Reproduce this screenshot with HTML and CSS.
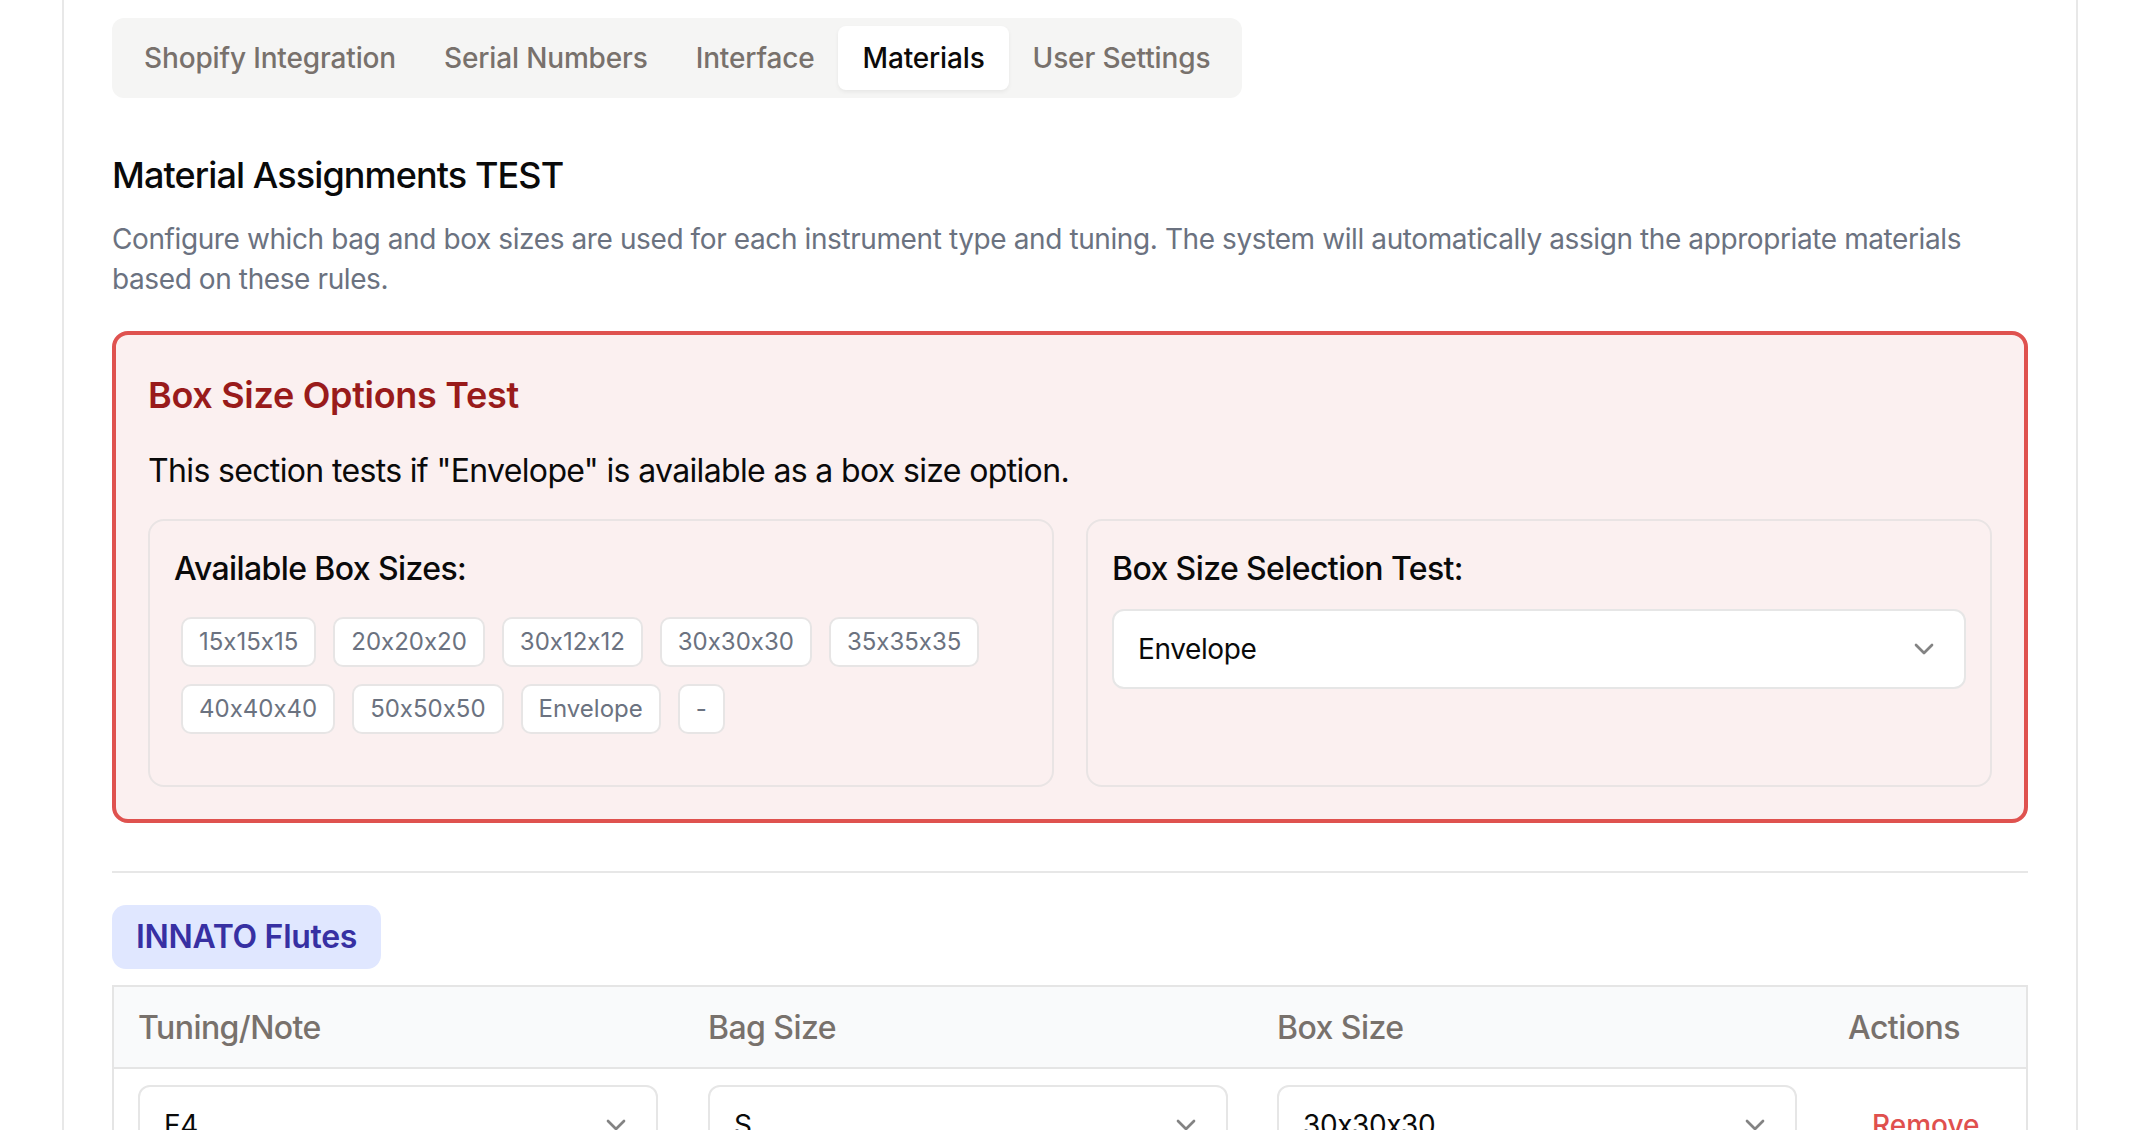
FILE: index.html
```html
<!DOCTYPE html>
<html lang="en">
<head>
<meta charset="utf-8">
<title>Materials</title>
<link rel="stylesheet" href="styles.css">
</head>
<body>
<div class="page">
  <div class="card">
    <div class="tabs">
      <div class="tab">Shopify Integration</div>
      <div class="tab">Serial Numbers</div>
      <div class="tab">Interface</div>
      <div class="tab active">Materials</div>
      <div class="tab">User Settings</div>
    </div>

    <h2 class="title">Material Assignments TEST</h2>
    <p class="desc">Configure which bag and box sizes are used for each instrument type and tuning. The system will automatically assign the appropriate materials based on these rules.</p>

    <section class="testbox">
      <h3 class="test-title">Box Size Options Test</h3>
      <p class="test-text">This section tests if "Envelope" is available as a box size option.</p>
      <div class="test-grid">
        <div class="panel panel-left">
          <div class="panel-label">Available Box Sizes:</div>
          <div class="badges">
            <span class="badge">15x15x15</span>
            <span class="badge">20x20x20</span>
            <span class="badge">30x12x12</span>
            <span class="badge">30x30x30</span>
            <span class="badge">35x35x35</span>
            <span class="badge">40x40x40</span>
            <span class="badge">50x50x50</span>
            <span class="badge">Envelope</span>
            <span class="badge">-</span>
          </div>
        </div>
        <div class="panel">
          <div class="panel-label">Box Size Selection Test:</div>
          <div class="select select-full">
            <span>Envelope</span>
            <svg class="chev" viewBox="0 0 24 24" width="32" height="32" fill="none" stroke="currentColor" stroke-width="2" stroke-linecap="round" stroke-linejoin="round"><path d="m6 9 6 6 6-6"/></svg>
          </div>
        </div>
      </div>
    </section>

    <hr class="divider">

    <div class="group-pill">INNATO Flutes</div>

    <table class="table">
      <colgroup>
        <col class="c1"><col class="c2"><col class="c3"><col class="c4">
      </colgroup>
      <thead>
        <tr>
          <th>Tuning/Note</th>
          <th>Bag Size</th>
          <th>Box Size</th>
          <th>Actions</th>
        </tr>
      </thead>
      <tbody>
        <tr>
          <td>
            <div class="select select-row"><span>F4</span><svg class="chev" viewBox="0 0 24 24" width="32" height="32" fill="none" stroke="currentColor" stroke-width="2" stroke-linecap="round" stroke-linejoin="round"><path d="m6 9 6 6 6-6"/></svg></div>
          </td>
          <td>
            <div class="select select-row"><span>S</span><svg class="chev" viewBox="0 0 24 24" width="32" height="32" fill="none" stroke="currentColor" stroke-width="2" stroke-linecap="round" stroke-linejoin="round"><path d="m6 9 6 6 6-6"/></svg></div>
          </td>
          <td>
            <div class="select select-row"><span>30x30x30</span><svg class="chev" viewBox="0 0 24 24" width="32" height="32" fill="none" stroke="currentColor" stroke-width="2" stroke-linecap="round" stroke-linejoin="round"><path d="m6 9 6 6 6-6"/></svg></div>
          </td>
          <td><button class="remove">Remove</button></td>
        </tr>
      </tbody>
    </table>
  </div>
</div>
</body>
</html>
```

FILE: styles.css
```css
* { box-sizing: border-box; }
html, body { margin: 0; padding: 0; background: #ffffff; }
body {
  font-family: Inter, "Liberation Sans", sans-serif;
  font-feature-settings: "calt" 0;
  color: #0a0a0a;
  overflow: hidden;
}
.page {
  padding-left: 62px;
}
.card {
  width: 2016px;
  border: 2px solid #e8e8e8;
  border-top: none;
  padding: 18px 48px 48px 48px;
  background: #ffffff;
}
.tabs {
  display: inline-flex;
  align-items: center;
  height: 80px;
  padding: 8px;
  background: #f5f5f4;
  border-radius: 12px;
}
.tab {
  height: 64px;
  display: flex;
  align-items: center;
  padding: 0 24px;
  font-size: 28px;
  font-weight: 500;
  letter-spacing: -0.15px;
  color: #78716c;
  border-radius: 8px;
  white-space: nowrap;
}
.tab.active {
  background: #ffffff;
  color: #0c0a09;
  box-shadow: 0 2px 4px rgba(0,0,0,0.06);
}
.title {
  margin: 49px 0 0 0;
  font-size: 36px;
  line-height: 56px;
  font-weight: 500;
  letter-spacing: -0.9px;
  color: #0a0a0a;
}
.desc {
  margin: 16px 0 0 0;
  font-size: 28px;
  line-height: 40px;
  letter-spacing: -0.4px;
  color: #6b7280;
}
.testbox {
  margin-top: 32px;
  border: 4px solid #df524f;
  border-radius: 16px;
  background: #fbf0f0;
  padding: 32px;
}
.test-title {
  margin: 0;
  font-size: 36px;
  line-height: 56px;
  font-weight: 600;
  letter-spacing: -0.3px;
  color: #991b1b;
}
.test-text {
  margin: 24px 0 0 0;
  font-size: 32px;
  line-height: 48px;
  letter-spacing: -0.65px;
  color: #0a0a0a;
}
.test-grid {
  margin-top: 24px;
  display: grid;
  grid-template-columns: 1fr 1fr;
  gap: 32px;
}
.panel {
  border: 2px solid #e9e4e4;
  border-radius: 16px;
  padding: 24px;
}
.panel-label {
  font-size: 32px;
  line-height: 48px;
  font-weight: 500;
  letter-spacing: -0.6px;
  color: #0a0a0a;
}
.badges {
  margin: 24px 0 27px 7px;
  display: flex;
  flex-wrap: wrap;
  gap: 17px 17px;
}
.badge {
  display: inline-block;
  padding: 7px 16px;
  font-size: 24px;
  line-height: 32px;
  color: #6b7280;
  background: #ffffff;
  border: 2px solid #e7e5e5;
  border-radius: 10px;
}
.select {
  display: flex;
  align-items: center;
  justify-content: space-between;
  height: 80px;
  padding: 0 24px;
  background: #ffffff;
  border: 2px solid #e6e6e6;
  border-radius: 12px;
  font-size: 28px;
  letter-spacing: -0.4px;
  color: #0a0a0a;
}
.select-full {
  margin-top: 16px;
}
.select-row {
  width: 520px;
}
.chev {
  color: #0a0a0a;
  opacity: 0.5;
  flex: none;
}
.divider {
  margin: 48px 0 0 0;
  border: none;
  border-top: 2px solid #e7e7e7;
  height: 0;
}
.group-pill {
  display: inline-block;
  margin-top: 32px;
  padding: 8px 24px;
  background: #e0e7ff;
  color: #3730a3;
  font-size: 32px;
  line-height: 48px;
  font-weight: 600;
  letter-spacing: -0.3px;
  border-radius: 14px;
}
.table {
  margin-top: 16px;
  width: 100%;
  border-collapse: collapse;
  table-layout: fixed;
  border: 2px solid #e5e5e5;
}
.c1 { width: 571px; }
.c2 { width: 569px; }
.c3 { width: 571px; }
.table th {
  height: 82px;
  padding: 0 24px;
  text-align: left;
  font-size: 32px;
  font-weight: 500;
  letter-spacing: -0.55px;
  color: #78716c;
  background: #f9fafb;
  border-bottom: 2px solid #e5e5e5;
}
.table td {
  padding: 16px 24px;
  vertical-align: middle;
}
.remove {
  font-family: inherit;
  background: transparent;
  border: none;
  padding: 0 24px;
  height: 80px;
  font-size: 28px;
  font-weight: 500;
  color: #e0504e;
  cursor: pointer;
}
```
